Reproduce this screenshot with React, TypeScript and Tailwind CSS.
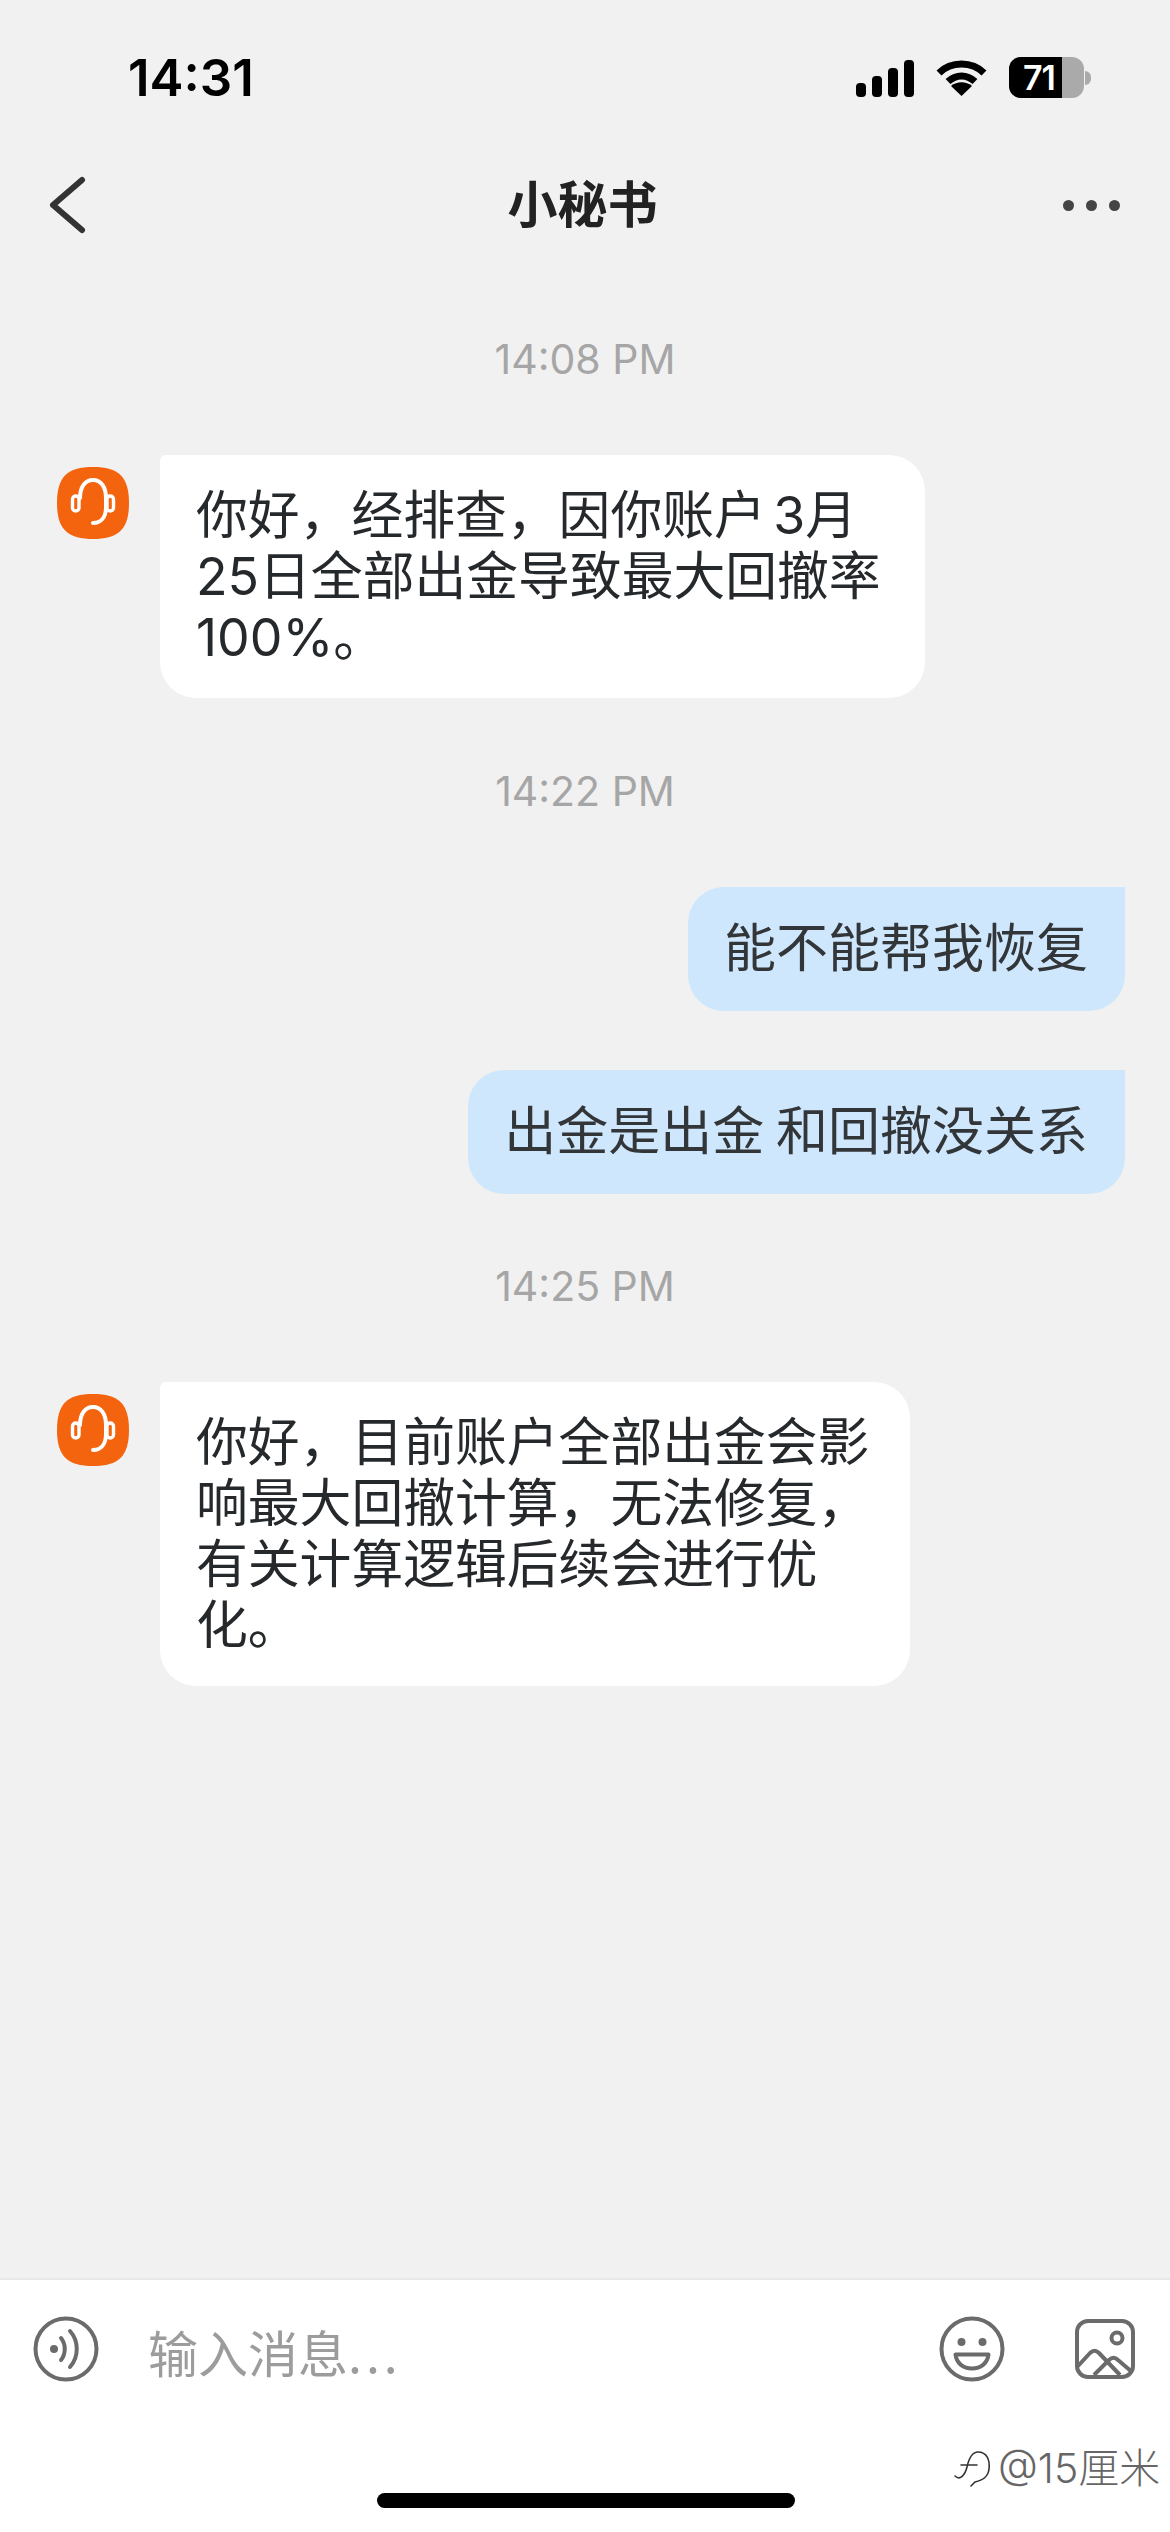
const font = "font-['Inter','Noto_Sans_CJK_SC',sans-serif]";

function Avatar() {
  return (
    <svg width="72" height="72" viewBox="0 0 72 72" className="shrink-0">
      <path d="M36 0C62 0 72 10 72 36S62 72 36 72 0 62 0 36 10 0 36 0Z" fill="#f4640e" />
      <path d="M23 31c0-11 5-18 13-18s13 7 13 18v9c0 10-5 16-13 16" fill="none" stroke="#fff" strokeWidth="4" strokeLinecap="round" />
      <rect x="15.500" y="29" width="6.500" height="15" rx="3.250" fill="none" stroke="#fff" strokeWidth="3.400" />
      <rect x="50" y="29" width="6.500" height="15" rx="3.250" fill="none" stroke="#fff" strokeWidth="3.400" />
    </svg>
  );
}

function Time({ children, className }: { children: string; className: string }) {
  return <div className={`text-center text-[41px] leading-[48px] text-[#a6a6a6] ${className}`}>{children}</div>;
}

function Left({ lines, w, className }: { lines: string[]; w: string; className: string }) {
  return (
    <div className={`flex items-start pl-[57px] gap-[31px] ${className}`}>
      <div className="mt-[12px]"><Avatar /></div>
      <div className={`bg-white rounded-[36px] rounded-tl-[6px] pl-[36px] pr-[10px] pt-[30px] pb-[30px] text-[51.8px] leading-[61px] text-[#26292c] [word-spacing:-7px] ${w}`}>
        {lines.map((l) => <div key={l} className="whitespace-pre">{l}</div>)}
      </div>
    </div>
  );
}

function Right({ text, className }: { text: string; className: string }) {
  return (
    <div className={`flex justify-end pr-[45px] ${className}`}>
      <div className="bg-[#cfe7fc] rounded-[36px] rounded-tr-none pl-[36px] pr-[37px] h-[124px] flex items-center text-[52px] text-[#333639] whitespace-pre [word-spacing:-3px]">
        {text}
      </div>
    </div>
  );
}

export default function App() {
  return (
    <div className={`w-[1170px] h-[2532px] bg-[#f1f1f1] flex flex-col overflow-hidden ${font}`}>
      <div className="h-[150px] shrink-0 flex items-start justify-between pl-[128px] pr-[79px] pt-[49px]">
        <div className="font-semibold text-[51px] leading-[58px] text-black">14:31</div>
        <div className="flex items-center gap-[22px] pt-[8px]">
          <svg width="58" height="38" viewBox="0 0 58 38">
            <rect x="0" y="24" width="10" height="14" rx="4" fill="#000" />
            <rect x="16" y="17" width="10" height="21" rx="4" fill="#000" />
            <rect x="32" y="9" width="10" height="29" rx="4" fill="#000" />
            <rect x="48" y="1" width="10" height="37" rx="4" fill="#000" />
          </svg>
          <svg width="51" height="38" viewBox="0 0 51 38">
            <path d="M3 14C15 2 36 2 48 14" fill="none" stroke="#000" strokeWidth="7" />
            <path d="M12 22.500C20 15 31 15 39 22.500" fill="none" stroke="#000" strokeWidth="7" />
            <path d="M25.500 37L15 27c6-5 15-5 21 0z" fill="#000" />
          </svg>
          <div className="flex items-center">
            <div className="w-[75px] h-[41px] rounded-[12px] overflow-hidden bg-[#aaaaaa]">
              <div className="h-full w-[53px] bg-black pl-[14px] flex items-center font-semibold text-[34px] tracking-[-1px] text-white">71</div>
            </div>
            <div className="w-[6px] h-[14px] bg-[#aaaaaa] rounded-r-full ml-[1px]" />
          </div>
        </div>
      </div>

      <div className="h-[110px] shrink-0 flex items-center justify-between pl-[49px] pr-[50px]">
        <svg width="37" height="58" viewBox="0 0 37 58">
          <path d="M33 4L4 29 33 54" fill="none" stroke="#333" strokeWidth="6" strokeLinecap="round" strokeLinejoin="round" />
        </svg>
        <div className="text-[50px] font-bold text-[#222] leading-[60px] ml-[16px]">小秘书</div>
        <div className="flex gap-[12px] items-center">
          <div className="w-[11px] h-[11px] rounded-full bg-[#444]" />
          <div className="w-[11px] h-[11px] rounded-full bg-[#444]" />
          <div className="w-[11px] h-[11px] rounded-full bg-[#444]" />
        </div>
      </div>

      <div className="flex-1 flex flex-col">
        <Time className="mt-[75px]">14:08 PM</Time>
        <Left className="mt-[72px]" w="w-[765px]" lines={["你好，经排查，因你账户 3月", "25日全部出金导致最大回撤率", "100%。"]} />
        <Time className="mt-[69px]">14:22 PM</Time>
        <Right className="mt-[72px]" text="能不能帮我恢复" />
        <Right className="mt-[59px]" text="出金是出金 和回撤没关系" />
        <Time className="mt-[68px]">14:25 PM</Time>
        <Left className="mt-[72px]" w="w-[750px]" lines={["你好，目前账户全部出金会影", "响最大回撤计算，无法修复，", "有关计算逻辑后续会进行优", "化。"]} />
      </div>

      <div className="h-[254px] shrink-0 bg-white border-t-[2px] border-[#e8e8e8] relative">
        <div className="flex items-center pl-[33px] pr-[35px] pt-[33px]">
          <svg width="66" height="66" viewBox="0 0 66 66" className="shrink-0">
            <circle cx="33" cy="33" r="30.500" fill="none" stroke="#6b6b6b" strokeWidth="4" />
            <circle cx="21" cy="33" r="4" fill="#6b6b6b" />
            <path d="M28 22c5 6 5 16 0 22" fill="none" stroke="#6b6b6b" strokeWidth="4" strokeLinecap="round" />
            <path d="M37 15c9 10 9 26 0 36" fill="none" stroke="#6b6b6b" strokeWidth="4" strokeLinecap="round" />
          </svg>
          <div className="flex-1 pl-[49px] text-[50px] leading-[66px] text-[#9c9c9c] pt-[5px] font-['Noto_Sans_CJK_SC',sans-serif]">
            输入消息<span className="tracking-[4px]">...</span>
          </div>
          <svg width="66" height="66" viewBox="0 0 66 66" className="shrink-0">
            <circle cx="33" cy="33" r="30.500" fill="none" stroke="#6b6b6b" strokeWidth="4" />
            <circle cx="22.500" cy="26" r="4" fill="#6b6b6b" />
            <circle cx="43.500" cy="26" r="4" fill="#6b6b6b" />
            <path d="M16.500 38.500h33c-1 9-8 14-16.500 14s-15.500-5-16.500-14z" fill="none" stroke="#6b6b6b" strokeWidth="4" strokeLinejoin="round" />
          </svg>
          <svg width="60" height="60" viewBox="0 0 60 60" className="shrink-0 ml-[70px]">
            <rect x="2" y="2" width="56" height="56" rx="11" fill="none" stroke="#6b6b6b" strokeWidth="4" />
            <circle cx="42" cy="19" r="5.500" fill="none" stroke="#6b6b6b" strokeWidth="4" />
            <path d="M3 47L15 34c3-3 6-3 9 0l21 22" fill="none" stroke="#6b6b6b" strokeWidth="4" strokeLinejoin="round" />
            <path d="M19 56L34 41c3-3 6-3 9 0l14 12" fill="none" stroke="#6b6b6b" strokeWidth="4" strokeLinejoin="round" />
          </svg>
        </div>
        <div className="absolute left-[377px] top-[213px] w-[418px] h-[15px] rounded-full bg-black" />
        <div className="absolute left-[952px] top-[165px] flex items-center gap-[6px] text-[41px] leading-[44px] text-[#666] font-light">
          <svg width="40" height="46" viewBox="0 0 40 46">
            <path d="M3 31C8 36 13 30 15 22c2-9 5-15 11-15 9 0 12 8 11 17-1 8-6 11-14 13l-4 4M9 20h16" fill="none" stroke="#333" strokeWidth="1.600" strokeLinecap="round" />
          </svg>
          <span>@15厘米</span>
        </div>
      </div>
    </div>
  );
}
